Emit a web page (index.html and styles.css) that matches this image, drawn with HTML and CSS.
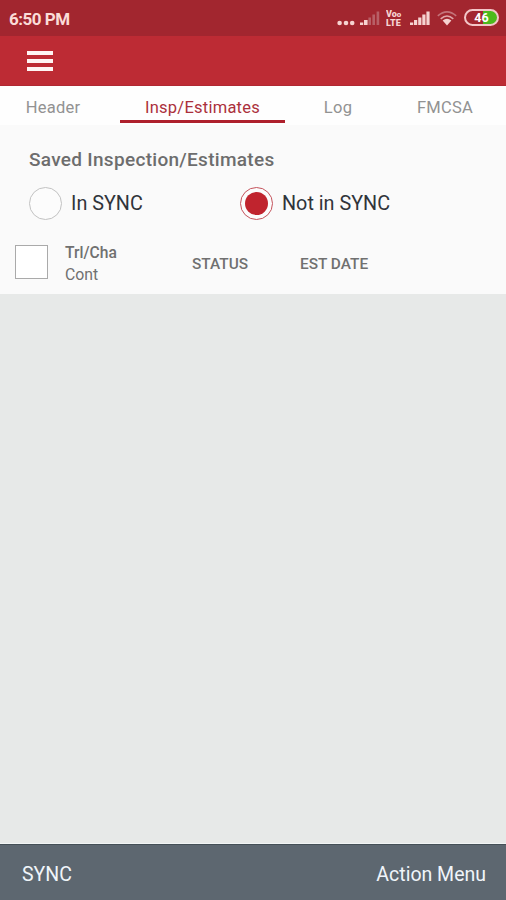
FILE: index.html
```html
<!DOCTYPE html>
<html lang="en">
<head>
<meta charset="utf-8">
<title>Saved Inspection/Estimates</title>
<link rel="stylesheet" href="styles.css">
</head>
<body>
<div class="app">
  <div class="status-bar">
    <span class="clock">6:50 PM</span>
    <div class="status-icons">
      <svg class="dots" width="18" height="6" viewBox="0 0 18 6"><circle cx="2.6" cy="3" r="2.3"/><circle cx="9" cy="3" r="2.3"/><circle cx="15.2" cy="3" r="2.3"/></svg>
      <svg class="signal" width="20" height="15" viewBox="0 0 20 15"><path d="M0 15v-2.4h3.2V15zM4 15v-5h3.6v5z"/><path class="dim" d="M8.4 15V7.5h2.6V15zM12.4 15V4.5H15V15zM16.6 15V1.5h2.6V15z"/></svg>
      <span class="volte"><span>Vo<i>o</i></span><span>LTE</span></span>
      <svg class="signal-full" width="20" height="15" viewBox="0 0 20 15"><path d="M0 15v-2.4h3.2V15zM4 15v-5h3.2v5zM8.2 15V7.5h3.2V15zM12.3 15V4.5h3.2V15zM16.4 15V1.5h3.2V15z"/></svg>
      <svg class="wifi" width="20" height="16" viewBox="0 0 20 16"><path class="arc dim" d="M.8 5.8Q10-2.2 19.2 5.8"/><path class="arc" d="M3.7 8.8Q10 3.2 16.3 8.8"/><path d="M5.6 10.6Q10 6.8 14.4 10.6L10 15.6z"/></svg>
      <span class="battery">46</span>
    </div>
  </div>
  <header class="app-bar">
    <button class="menu" aria-label="Menu"><span></span><span></span><span></span></button>
  </header>
  <nav class="tabs">
    <a class="tab">Header</a>
    <a class="tab active">Insp/Estimates</a>
    <a class="tab log">Log</a>
    <a class="tab fmcsa">FMCSA</a>
  </nav>
  <section class="filters">
    <h1>Saved Inspection/Estimates</h1>
    <div class="options">
      <div class="option"><span class="radio"></span><span class="label">In SYNC</span></div>
      <div class="option"><span class="radio checked"></span><span class="label">Not in SYNC</span></div>
    </div>
    <div class="columns">
      <span class="checkbox"></span>
      <div class="unit"><span class="trl">Trl/Cha</span><span class="cont">Cont</span></div>
      <span class="status">STATUS</span>
      <span class="date">EST DATE</span>
    </div>
  </section>
  <main class="list"></main>
  <footer class="bottom-bar"><span class="sync">SYNC</span><span class="action">Action Menu</span></footer>
</div>
</body>
</html>
```

FILE: styles.css
```css
* { box-sizing: border-box; }
body { margin: 0; font-family: Roboto, "Liberation Sans", sans-serif; }
.app { width: 506px; height: 900px; display: flex; flex-direction: column; background: #e7e9e8; }

.status-bar { height: 36px; flex: none; background: #a2262f; display: flex; align-items: center; justify-content: space-between; padding: 1px 7px 0 9px; color: #fbdcd8; }
.clock { font-size: 17px; font-weight: 700; line-height: 20px; letter-spacing: -0.5px; }
.status-icons { display: flex; height: 36px; align-items: flex-start; fill: #f6d3d1; }
.dots { margin: 19px 5px 0 0; }
.signal { margin: 9px 6px 0 0; }
.signal .dim { fill: #b85f66; }
.volte { width: 18px; margin: 9px 6px 0 0; display: flex; flex-direction: column; font-size: 9px; font-weight: 900; line-height: 9px; color: #f6d3d1; }
.volte > span { height: 9px; overflow: hidden; }
.volte i { font-size: 8px; line-height: 8px; font-style: normal; }
.signal-full { margin: 9px 7px 0 0; }
.wifi { margin: 9px 7px 0 0; }
.wifi .arc { fill: none; stroke: #e0a6a9; stroke-width: 1.6; }
.wifi .arc.dim { fill: none; stroke: #c4747a; }
.battery { width: 35px; height: 17px; margin-top: 8px; border: 2px solid #f3c6c8; border-radius: 9px; background: linear-gradient(90deg, #a2262f 0 54%, #4cba1c 54%); color: #fff; font-size: 12.5px; font-weight: 700; line-height: 13px; text-align: center; }

.app-bar { height: 50px; flex: none; background: #bd2b34; padding: 15px 27px; border-bottom: 1px solid #b02832; }
.menu { display: flex; flex-direction: column; gap: 4px; width: 26px; padding: 0; border: 0; background: none; }
.menu span { height: 4px; background: #fff5f4; }

.tabs { height: 39px; flex: none; display: flex; background: #fefefe; padding-right: 7px; }
.tab { height: 37px; padding: 11px 0 0; font-size: 16.5px; line-height: 21px; text-align: center; color: #929292; width: 106px; letter-spacing: 0.25px; white-space: nowrap; }
.tab.active { width: 165px; margin: 0 14px; color: #ab303b; border-bottom: 3px solid #ae202c; }
.tab.log { width: 78px; }
.tab.fmcsa { width: 108px; margin-left: 14px; }

.filters { height: 169px; flex: none; background: #fafafa; padding: 23px 15px 0; }
h1 { margin: 0 0 0 14px; font-size: 19px; font-weight: 500; line-height: 24px; color: #6d6d6d; letter-spacing: 0.3px; }
.options { display: flex; margin: 14px 0 0 14px; height: 34px; }
.option { width: 211px; display: flex; align-items: center; gap: 9px; font-size: 19.8px; line-height: 24px; color: #30343a; white-space: nowrap; }
.label { padding-top: 2px; }
.radio { width: 33px; height: 33px; border: 1px solid #c2c2c2; border-radius: 50%; background: #fcfcfc; display: flex; align-items: center; justify-content: center; }
.radio.checked { border-color: #c4525b; }
.radio.checked::before { content: ""; width: 23px; height: 23px; border-radius: 50%; background: #c0242e; }
.columns { display: grid; grid-template-columns: 50px 127px 108px 1fr; align-items: center; margin-top: 20px; height: 46px; color: #707070; font-size: 16px; }
.checkbox { width: 33px; height: 34px; margin-top: -2px; border: 1px solid #aaa; background: #fff; }
.unit { display: flex; flex-direction: column; line-height: 22px; padding-top: 2px; }
.trl { font-weight: 500; font-size: 15.6px; }
.cont { font-size: 15.8px; }
.status, .date { font-weight: 500; font-size: 15.4px; padding-top: 2px; }

.list { flex: 1; border-bottom: 1px solid #f2f5f5; }
.bottom-bar { height: 56px; flex: none; background: #5d6770; border-top: 1px solid #455057; display: flex; align-items: center; justify-content: space-between; padding: 4px 20px 0 22px; color: #f0f5fa; font-size: 19.5px; }
```
